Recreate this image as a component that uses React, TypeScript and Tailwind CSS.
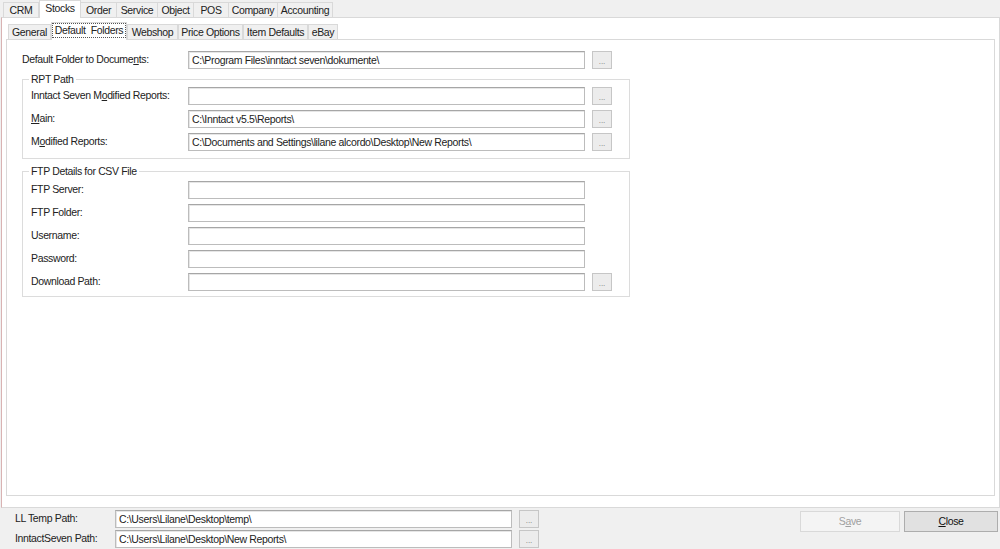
import React from "react";

const outerTabs = [
  { label: "CRM", w: "w-[36px]" },
  { label: "Stocks", w: "w-[42px]", active: true },
  { label: "Order", w: "w-[37px]" },
  { label: "Service", w: "w-[42px]" },
  { label: "Object", w: "w-[37px]" },
  { label: "POS", w: "w-[36px]" },
  { label: "Company", w: "w-[50px]" },
  { label: "Accounting", w: "w-[56px]" },
];

const innerTabs = [
  { label: "General", w: "w-[43px]" },
  { label: "Default  Folders", w: "w-[76px]", active: true },
  { label: "Webshop", w: "w-[51px]" },
  { label: "Price Options", w: "w-[65px]" },
  { label: "Item Defaults", w: "w-[65px]" },
  { label: "eBay", w: "w-[30px]" },
];

function Browse() {
  return (
    <div className="ml-[7px] w-[20px] h-[18px] border border-[#c6c6c6] bg-[#ececec] flex items-end justify-center pb-[2px] text-[8px] leading-[8px] text-[#777] tracking-normal">
      ...
    </div>
  );
}

function Field({ value, w = "w-[397px]" }: { value?: string; w?: string }) {
  return (
    <div
      className={`${w} h-[18px] border border-[#bcbcbc] border-t-[#a6a6a6] bg-white pl-[3px] flex items-center whitespace-nowrap overflow-hidden leading-[16px] shadow-[inset_1px_1px_0_#e6e6e6]`}
    >
      {value}
    </div>
  );
}

function Row({
  label,
  value,
  browse,
  lw = "w-[157px]",
}: {
  label: React.ReactNode;
  value?: string;
  browse?: boolean;
  lw?: string;
}) {
  return (
    <div className="flex items-center h-[18px]">
      <div className={`${lw} shrink-0 whitespace-nowrap`}>{label}</div>
      <Field value={value} />
      {browse && <Browse />}
    </div>
  );
}

export default function App() {
  return (
    <div className="w-[1000px] h-[549px] bg-[#f0f0f0] flex flex-col overflow-hidden font-['Liberation_Sans',Arial,sans-serif] text-[10.5px] tracking-[-0.35px] text-[#222]">
      {/* outer tab strip */}
      <div className="flex items-end h-[17px] pl-[3px] shrink-0">
        {outerTabs.map((t) =>
          t.active ? (
            <div
              key={t.label}
              className={`${t.w} h-[18px] -mb-px relative z-10 bg-white border border-b-0 border-[#d9d9d9] flex items-start justify-center pt-[1px] leading-[13px]`}
            >
              {t.label}
            </div>
          ) : (
            <div
              key={t.label}
              className={`${t.w} h-[15px] bg-[#f0f0f0] border border-b-0 border-[#d9d9d9] -ml-px first:ml-0 flex items-center justify-center leading-[13px]`}
            >
              {t.label}
            </div>
          )
        )}
      </div>

      {/* outer panel */}
      <div className="h-[491px] shrink-0 ml-[1px] bg-white border border-[#d9d9d9] border-l-[#d9b3b3] flex flex-col px-[4px] pt-[4px] pb-[11px]">
        {/* inner tab strip */}
        <div className="flex items-end h-[17px] pl-[2px] shrink-0">
          {innerTabs.map((t) =>
            t.active ? (
              <div
                key={t.label}
                className={`${t.w} h-[18px] -mb-px relative z-10 bg-white border border-b-0 border-[#d9d9d9] flex items-start justify-center pt-[1px]`}
              >
                <span className="outline outline-1 outline-dotted outline-[#555] px-[2px] leading-[13px] whitespace-pre">
                  {t.label}
                </span>
              </div>
            ) : (
              <div
                key={t.label}
                className={`${t.w} h-[15px] bg-[#f0f0f0] border border-b-0 border-[#d9d9d9] flex items-center justify-center leading-[13px] whitespace-nowrap`}
              >
                {t.label}
              </div>
            )
          )}
        </div>

        {/* inner panel */}
        <div className="flex-1 border border-[#d9d9d9] bg-white pl-[15px] pt-[11px]">
          <Row
            lw="w-[166px]"
            label={
              <>
                Default Folder to Docume<u>n</u>ts:
              </>
            }
            value="C:\Program Files\inntact seven\dokumente\"
            browse
          />

          <fieldset className="mt-[4px] w-[608px] border border-[#dcdcdc] pl-[8px] pt-[1px] pb-[7px] flex flex-col gap-[5px]">
            <legend className="-ml-[2px] px-[2px] leading-[13px]">RPT Path</legend>
            <Row
              label={
                <>
                  Inntact Seven M<u>o</u>dified Reports:
                </>
              }
              browse
            />
            <Row
              label={
                <>
                  <u>M</u>ain:
                </>
              }
              value="C:\Inntact v5.5\Reports\"
              browse
            />
            <Row
              label={
                <>
                  M<u>o</u>dified Reports:
                </>
              }
              value="C:\Documents and Settings\lilane alcordo\Desktop\New Reports\"
              browse
            />
          </fieldset>

          <fieldset className="mt-[6px] w-[608px] border border-[#dcdcdc] pl-[8px] pt-[3px] pb-[5px] flex flex-col gap-[5px]">
            <legend className="-ml-[2px] px-[2px] leading-[13px]">FTP Details for CSV File</legend>
            <Row label="FTP Server:" />
            <Row label="FTP Folder:" />
            <Row label="Username:" />
            <Row label="Password:" />
            <Row label="Download Path:" browse />
          </fieldset>
        </div>
      </div>

      {/* bottom bar */}
      <div className="flex-1 flex items-start pt-[2px]">
        <div className="flex flex-col gap-[2px] pl-[15px]">
          <div className="flex items-center h-[18px]">
            <div className="w-[100px] shrink-0">LL Temp Path:</div>
            <Field value="C:\Users\Lilane\Desktop\temp\" />
            <Browse />
          </div>
          <div className="flex items-center h-[18px]">
            <div className="w-[100px] shrink-0">InntactSeven Path:</div>
            <Field value="C:\Users\Lilane\Desktop\New Reports\" />
            <Browse />
          </div>
        </div>
        <div className="flex-1" />
        <div className="flex gap-[4px] pt-[1px] pr-[2px]">
          <div className="w-[100px] h-[21px] border border-[#d9d9d9] bg-[#f4f4f4] text-[#a0a0a0] flex items-center justify-center">
            <span>
              S<u>a</u>ve
            </span>
          </div>
          <div className="w-[94px] h-[21px] border border-[#adadad] bg-[#e1e1e1] text-[#111] flex items-center justify-center">
            <span>
              <u>C</u>lose
            </span>
          </div>
        </div>
      </div>
    </div>
  );
}
